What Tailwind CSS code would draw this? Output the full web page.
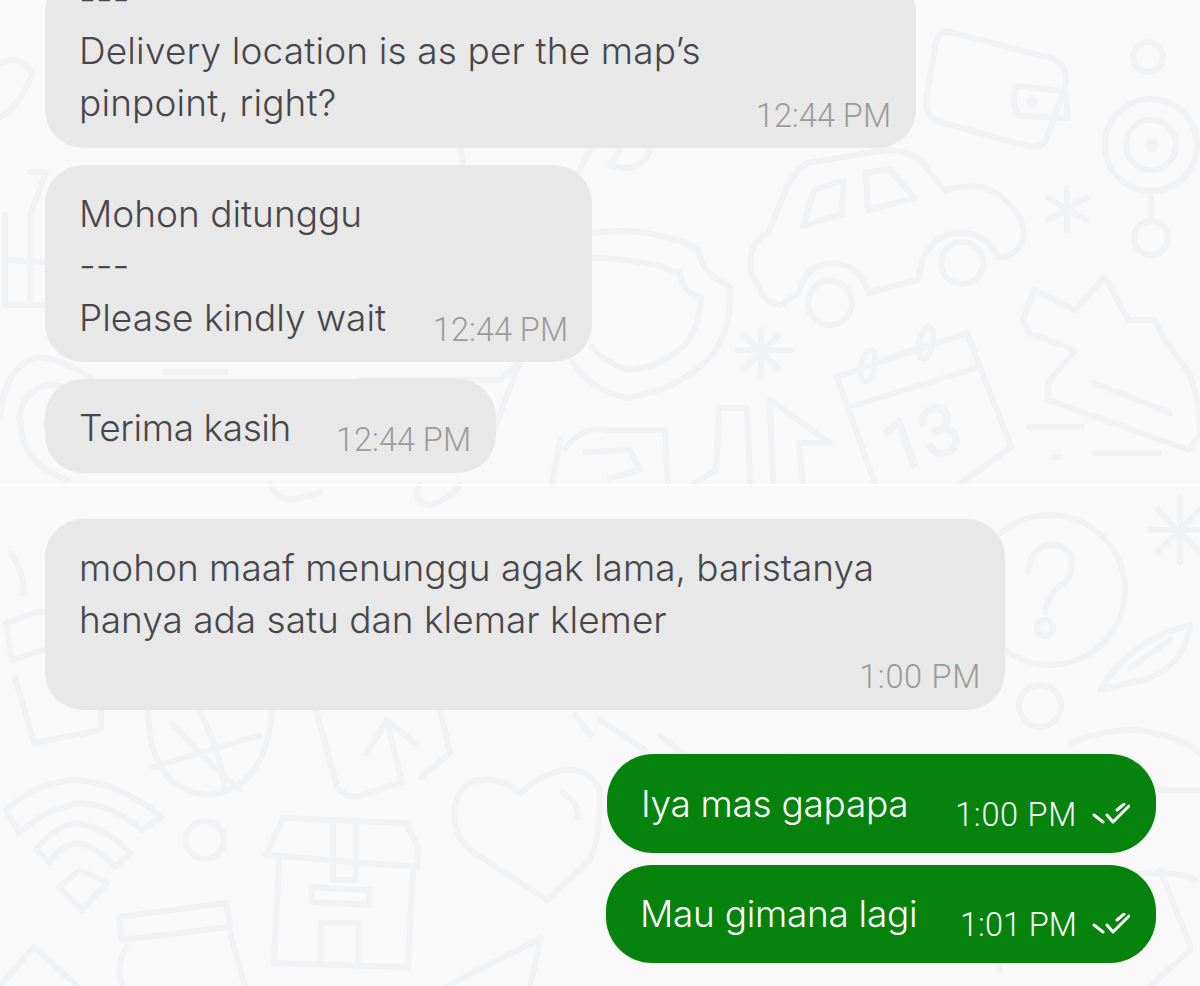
<!DOCTYPE html>
<html>
<head>
<meta charset="utf-8">
<script src="https://cdn.jsdelivr.net/npm/@tailwindcss/browser@4"></script>
</head>
<body class="m-0">
<div class="relative w-[1200px] h-[986px] overflow-hidden bg-[#f9f9fa] font-['Inter',sans-serif] font-light text-[37px] leading-[52px] text-[#47474b]">
  <svg class="absolute left-0 top-0" width="1200" height="986" viewBox="0 0 1200 986" fill="none" stroke="#f1f2f4" stroke-width="6" stroke-linecap="round" stroke-linejoin="round">
    <!-- wallet -->
    <path d="M950 32 L1050 58 Q1068 64 1066 84 L1047 138 Q1042 150 1028 146 L940 122 Q924 116 926 100 L936 42 Q940 30 950 32Z"/>
    <path d="M1018 86 L1066 92 L1068 118 L1020 116 Q1008 100 1018 86Z"/>
    <circle cx="1032" cy="101" r="3"/>
    <!-- target -->
    <circle cx="1151" cy="145" r="46"/><circle cx="1151" cy="145" r="25"/><circle cx="1152" cy="145" r="4"/>
    <path d="M1151 193V220"/><circle cx="1151" cy="238" r="17"/><circle cx="1148" cy="57" r="15"/>
    <!-- asterisks -->
    <path d="M1067 188V230M1048 198L1086 220M1086 198L1048 220"/>
    <path d="M761 330V376M738 350H790M745 368L778 336M745 336L778 368"/>
    <path d="M1180 498V562M1150 530H1200M1158 510L1200 552M1158 552L1200 510"/>
    <!-- car -->
    <path d="M780 305Q760 300 760 287Q748 275 751 257Q752 242 768 233L787 187Q795 170 807 163L887 150Q905 150 921 160L944 190Q965 185 983 187Q1005 195 1017 213Q1026 228 1023 240Q1018 252 1005 257L998 257Q985 232 960 233Q930 235 922 262L918 280L868 293Q860 263 830 263Q805 265 799 293Z"/>
    <circle cx="830" cy="303" r="22"/><circle cx="962" cy="263" r="21"/>
    <path d="M803 226L814 190L844 180L842 214Z M868 210L866 172L890 170L915 198Z"/>
    <!-- shield -->
    <path d="M592 233Q650 225 699 250Q700 272 730 287Q732 330 712 355Q680 390 627 398Q590 390 572 362"/>
    <path d="M592 258Q640 258 680 273Q682 292 701 298Q700 325 685 345Q660 368 627 370Q605 362 592 347"/>
    <!-- calendar -->
    <path d="M837 377L967 333L1011 447L960 484M875 484L837 377M849 407L979 367"/>
    <ellipse cx="868" cy="366" rx="7" ry="16" transform="rotate(12 868 366)"/>
    <ellipse cx="926" cy="343" rx="7" ry="16" transform="rotate(12 926 343)"/>
    <path d="M868 366L926 345"/>
    <text x="885" y="462" font-family="Roboto, sans-serif" font-size="68" font-weight="300" fill="none" stroke="#f1f2f4" stroke-width="4" transform="rotate(-20 920 440)">13</text>
    <!-- arrow -->
    <path d="M719 408L747 408L750 484M770 400L830 443L799 443L803 484M770 400L773 484M719 408L716 470L694 484"/>
    <!-- map pieces -->
    <path d="M608 430L665 430L668 484M565 448Q585 425 608 430M585 452L630 450L640 470L610 478M560 440L552 484"/>
    <!-- carrot -->
    <path d="M1034 290L1075 310L1105 277L1128 320L1155 320L1163 337L1189 373Q1200 400 1200 433L1189 450L1048 400L1048 383L1075 350L1029 333L1023 320Z"/>
    <path d="M1094 383L1170 413M1029 427H1082M1054 457H1060M1094 453H1159"/>
    <!-- top left pieces -->
    <path d="M0 62Q25 55 32 75Q20 105 0 118"/>
    <path d="M30 172H46L30 215V300M5 215L5 305H45M5 260L45 262"/>
    <path d="M0 417Q5 365 38 357Q75 360 110 395M19 417Q25 385 55 385Q85 390 110 410M20 417Q20 465 68 480M45 425Q50 410 70 408"/>
    <path d="M165 372H225M360 380H500L520 362L490 440M460 148L470 200M590 150L560 205M620 150L610 165Q640 175 650 150"/>
    <!-- below divider -->
    <path d="M270 484Q280 510 320 492M420 484Q410 500 430 505Q450 500 460 484"/>
    <circle cx="1050" cy="590" r="75"/>
    <path d="M1028 572Q1030 545 1055 545Q1080 550 1068 580Q1048 592 1045 612"/><circle cx="1045" cy="628" r="8"/>
    <path d="M1100 690Q1130 640 1190 625Q1185 665 1145 680Q1120 685 1100 690ZM1130 668L1170 640"/>
    <circle cx="1040" cy="706" r="21"/>
    <path d="M6 810Q40 780 77 780Q125 785 161 817L142 830Q110 803 77 803Q45 810 19 833ZM36 850Q55 825 77 823Q110 830 130 853L115 867Q95 845 77 843Q60 845 50 863ZM59 887L80 870L107 883L82 910Z"/>
    <circle cx="205" cy="840" r="19"/>
    <path d="M266 855L283 818L406 823L419 850L417 867ZM279 857L274 963L408 967L413 870M333 820V880H356V822M312 887L369 890V905L312 902ZM321 963V923H358V965"/>
    <path d="M547 900L470 850Q450 830 455 805Q462 780 482 780Q505 778 520 793Q540 775 563 770Q590 768 600 790Q600 840 590 860ZM563 793Q578 802 578 817"/>
    <path d="M148 712Q150 790 208 795Q265 790 272 712M172 723Q205 760 240 790M153 767Q210 750 260 735M200 712Q220 750 225 790"/>
    <path d="M316 710L337 787Q345 797 356 797L398 783L402 783L387 720M367 753L387 720L415 743M421 777L450 753L440 710"/>
    <path d="M6 623L38 612L85 610L100 632L12 660ZM15 677L34 743L101 730V710"/>
    <path d="M119 917L226 903L230 927L122 940ZM126 947Q115 970 122 986M230 933L245 986"/>
    <path d="M0 986L34 947L77 986"/>
    <path d="M448 986L541 938L530 986"/>
    <path d="M11 553Q25 575 23 593"/>
    <path d="M775 790L790 755M600 720L645 750L615 790M575 715L590 735M660 735L690 760M1071 743Q1100 730 1136 730Q1180 735 1200 753M1059 790H1200M1120 875Q1180 870 1195 880M1190 950L1150 986M980 880L1000 970M1160 870L1190 945" />
  </svg>

  <div class="absolute left-0 top-[484px] w-full h-[2px] bg-white"></div>

  <div class="relative flex flex-col items-start pl-[45px] pr-[44px]">
    <div class="-mt-[27px] w-[871px] rounded-[38px] bg-[#e8e8e8] pl-[34px] pr-[25px] pb-[19px] flex justify-between items-end">
      <div class="tracking-[0.14px]">---<br>Delivery location is as per the map’s<br>pinpoint, right?</div>
      <span class="font-['Roboto',sans-serif] tracking-normal text-[32.5px] leading-[36px] text-[#9b9b9b] -mb-[5px]">12:44 PM</span>
    </div>
    <div class="mt-[17px] w-[547px] rounded-[38px] bg-[#e8e8e8] pl-[34px] pr-[24px] pt-[23px] pb-[18px] flex justify-between items-end">
      <div>Mohon ditunggu<br>---<br>Please kindly wait</div>
      <span class="font-['Roboto',sans-serif] text-[32.5px] leading-[36px] text-[#9b9b9b] -mb-[4px]">12:44 PM</span>
    </div>
    <div class="mt-[17px] w-[451px] rounded-[38px] bg-[#e8e8e8] pl-[34px] pr-[25px] pt-[23px] pb-[19px] flex justify-between items-end">
      <div class="tracking-[-0.4px]">Terima kasih</div>
      <span class="font-['Roboto',sans-serif] text-[32.5px] leading-[36px] text-[#9b9b9b] -mb-[4px]">12:44 PM</span>
    </div>
    <div class="mt-[46px] w-[960px] rounded-[38px] bg-[#e8e8e8] pl-[34px] pr-[24px] pt-[23px] pb-[15px] flex flex-col">
      <div>mohon maaf menunggu agak lama, baristanya<br>hanya ada satu dan klemar klemer</div>
      <span class="self-end mt-[13px] font-['Roboto',sans-serif] text-[32.5px] tracking-[0.7px] leading-[36px] text-[#9b9b9b]">1:00 PM</span>
    </div>
    <div class="mt-[44px] self-end w-[549px] rounded-[46px] bg-[#05830c] text-white pl-[34px] pr-[26px] pt-[24px] pb-[23px] flex justify-between items-end">
      <div class="tracking-[-0.3px]">Iya mas gapapa</div>
      <div class="flex items-center gap-[15px] -mb-[3px]">
        <span class="font-['Roboto',sans-serif] text-[32.5px] tracking-[0.7px] leading-[36px]">1:00 PM</span>
        <svg class="-translate-y-px" width="38" height="22" viewBox="0 0 38 22" fill="none" stroke="#fff" stroke-width="3" stroke-linecap="round" stroke-linejoin="round"><path d="M2 12L11 19M15 12L21 19L37 3M25 7L32 1"/></svg>
      </div>
    </div>
    <div class="mt-[12px] self-end w-[550px] rounded-[46px] bg-[#05830c] text-white pl-[34px] pr-[26px] pt-[23px] pb-[23px] flex justify-between items-end">
      <div class="tracking-[-0.3px]">Mau gimana lagi</div>
      <div class="flex items-center gap-[15px] -mb-[3px]">
        <span class="font-['Roboto',sans-serif] text-[32.5px] leading-[36px]">1:01 PM</span>
        <svg class="-translate-y-px" width="38" height="22" viewBox="0 0 38 22" fill="none" stroke="#fff" stroke-width="3" stroke-linecap="round" stroke-linejoin="round"><path d="M2 12L11 19M15 12L21 19L37 3M25 7L32 1"/></svg>
      </div>
    </div>
  </div>
</div>
</body>
</html>
